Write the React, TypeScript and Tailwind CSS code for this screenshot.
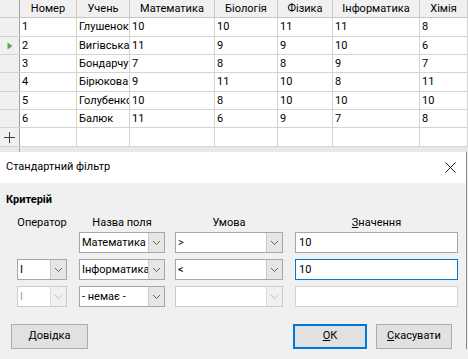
import React from 'react';

const columns = [
  { name: 'Номер', w: 57 },
  { name: 'Учень', w: 53 },
  { name: 'Математика', w: 85 },
  { name: 'Біологія', w: 63 },
  { name: 'Фізика', w: 55 },
  { name: 'Інформатика', w: 87 },
  { name: 'Хімія', w: 48 },
];

const rows = [
  ['1', 'Глушенок', '10', '10', '11', '11', '8'],
  ['2', 'Вигівська', '11', '9', '9', '10', '6'],
  ['3', 'Бондарчук', '7', '8', '8', '9', '7'],
  ['4', 'Бірюкова', '9', '11', '10', '8', '11'],
  ['5', 'Голубенко', '10', '8', '10', '10', '10'],
  ['6', 'Балюк', '11', '6', '9', '7', '8'],
  ['', '', '', '', '', '', ''],
];

// row heights so grid lines land on whole pixels
const rowHeights = [19, 18, 18, 19, 18, 18, 19];

const Chevron = ({ disabled }: { disabled?: boolean }) => (
  <svg width="9" height="6" viewBox="0 0 9 6" fill="none">
    <path d="M1 1l3.5 3.5L8 1" stroke={disabled ? '#c4c4c4' : '#606060'} strokeWidth="1" />
  </svg>
);

const Select = ({
  value,
  width,
  disabled,
  textDisabled,
}: {
  value: string;
  width: number;
  disabled?: boolean;
  textDisabled?: boolean;
}) => (
  <div
    className={`flex h-[21px] border bg-white ${disabled ? 'border-[#cccccc]' : 'border-[#a6a6a6]'}`}
    style={{ width }}
  >
    <div className={`flex-1 overflow-hidden whitespace-nowrap pl-[2px] leading-[19px] ${textDisabled ? 'text-[#a0a0a0]' : 'text-black'}`}>
      {value}
    </div>
    <div className={`flex w-[16px] items-center justify-center border-l ${disabled ? 'border-[#dcdcdc] bg-[#f0f0f0]' : 'border-[#c8c8c8] bg-[#e6e6e6]'}`}>
      <Chevron disabled={disabled} />
    </div>
  </div>
);

export default function App() {
  return (
    <div className="h-[359px] w-[468px] overflow-hidden bg-[#f0f0f0] text-[11px] text-black" style={{ fontFamily: 'Roboto, "Segoe UI", sans-serif' }}>
      {/* spreadsheet */}
      <div className="h-[152px] bg-[#e8e8e8]">
        <div className="flex h-[18px] border-b border-[#c8c8c8] bg-[#f0f0f0]">
          <div className="w-[20px] shrink-0 border-r border-[#a0a0a0]" />
          {columns.map((c) => (
            <div
              key={c.name}
              className="shrink-0 overflow-hidden whitespace-nowrap border-r border-[#c8c8c8] text-center leading-[17px]"
              style={{ width: c.w }}
            >
              {c.name}
            </div>
          ))}
        </div>
        {rows.map((r, i) => (
          <div key={i} className="flex border-b border-[#d4d4d4] bg-white" style={{ height: rowHeights[i] }}>
            <div className="flex w-[20px] shrink-0 items-center justify-center border-r border-[#a0a0a0] bg-[#f0f0f0]">
              {i === 1 && (
                <svg width="6" height="8" viewBox="0 0 6 8">
                  <path d="M0.5 0.5L5.5 4L0.5 7.5Z" fill="#5ca353" />
                </svg>
              )}
              {i === 6 && (
                <svg width="11" height="11" viewBox="0 0 11 11">
                  <path d="M5.5 0v11M0 5.5h11" stroke="#404040" strokeWidth="1" />
                </svg>
              )}
            </div>
            {r.map((v, j) => (
              <div
                key={j}
                className="shrink-0 overflow-hidden whitespace-nowrap border-r border-[#d4d4d4] pl-[2px] leading-[17px]"
                style={{ width: columns[j].w }}
              >
                {v}
              </div>
            ))}
          </div>
        ))}
        <div className="ml-[19px] h-[5px] w-[1px] bg-[#a0a0a0]" />
      </div>

      {/* dialog */}
      <div className="w-[467px] border-r border-[#8a8a8a] bg-[#f0f0f0]">
        <div className="flex h-[31px] items-center justify-between bg-white pl-[6px] pr-[10px]">
          <span>Стандартний фільтр</span>
          <svg width="11" height="11" viewBox="0 0 11 11">
            <path d="M0.5 0.5l10 10M10.5 0.5l-10 10" stroke="#202020" strokeWidth="1" />
          </svg>
        </div>
        <div className="px-[6px] pt-[9px]">
          <div className="font-bold leading-[16px]">Критерій</div>
          <div className="mt-[7px] flex pl-[11px] leading-[16px]">
            <div className="w-[50px] text-center">Оператор</div>
            <div className="ml-[12px] w-[86px] text-center">Назва поля</div>
            <div className="ml-[10px] w-[108px] text-center">Умова</div>
            <div className="ml-[12px] w-[163px] text-center">
              <span className="underline">З</span>начення
            </div>
          </div>
          <div className="mt-[1px] flex flex-col gap-[6px] pl-[11px]">
            <div className="flex">
              <div className="w-[50px]" />
              <div className="ml-[12px]">
                <Select value="Математика" width={86} />
              </div>
              <div className="ml-[10px]">
                <Select value=">" width={108} />
              </div>
              <div className="ml-[12px] h-[21px] w-[163px] border border-[#a6a6a6] bg-white pl-[3px] leading-[19px]">10</div>
            </div>
            <div className="flex">
              <Select value="І" width={50} />
              <div className="ml-[12px]">
                <Select value="Інформатика" width={86} />
              </div>
              <div className="ml-[10px]">
                <Select value="<" width={108} />
              </div>
              <div className="ml-[12px] h-[21px] w-[163px] border border-[#0078d7] bg-white pl-[3px] leading-[19px]">10</div>
            </div>
            <div className="flex">
              <Select value="І" width={50} disabled textDisabled />
              <div className="ml-[12px]">
                <Select value="- немає -" width={86} />
              </div>
              <div className="ml-[10px]">
                <Select value="" width={108} disabled />
              </div>
              <div className="ml-[12px] h-[21px] w-[163px] border border-[#d4d4d4] bg-white" />
            </div>
          </div>
          <div className="mt-[17px] flex items-center pl-[5px]">
            <button className="h-[25px] w-[77px] border border-[#adadad] bg-[#e1e1e1]">
              <span className="underline">Д</span>овідка
            </button>
            <div className="flex-1" />
            <button className="h-[25px] w-[74px] border-2 border-[#0078d7] bg-[#e1e1e1]">
              <span className="underline">О</span>К
            </button>
            <button className="ml-[9px] mr-[8px] h-[25px] w-[76px] border border-[#adadad] bg-[#e1e1e1]">
              <span className="underline">С</span>касувати
            </button>
          </div>
        </div>
      </div>
    </div>
  );
}
